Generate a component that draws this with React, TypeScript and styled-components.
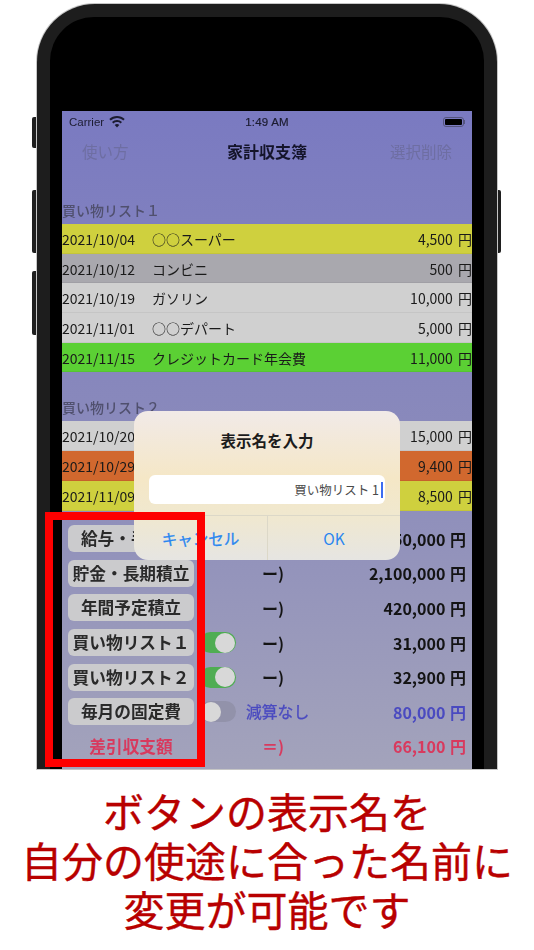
import React from 'react';
import styled, { createGlobalStyle } from 'styled-components';

const JP = `"Noto Sans CJK JP", "Noto Sans", sans-serif`;

const Global = createGlobalStyle`
  html, body { margin: 0; padding: 0; background: #fff; }
  body { font-family: ${JP}; }
`;

const Page = styled.div`
  position: relative;
  width: 534px;
  height: 950px;
  overflow: hidden;
  background: #fff;
`;

const Phone = styled.div`
  position: relative;
  box-sizing: border-box;
  margin: 4px 0 0 37px;
  width: 460px;
  height: 765px;
  padding: 13px 13px 0;
  background: #1d1d1d;
  border-radius: 58px 58px 0 0;
  box-shadow: 0 0 0 1px #c6c6c6;
  filter: blur(0.5px);
`;

const Bezel = styled.div`
  box-sizing: border-box;
  height: 100%;
  padding: 94px 12px 0;
  background: #000;
  border-radius: 44px 44px 0 0;
`;

const Screen = styled.div`
  height: 100%;
  overflow: hidden;
  background: linear-gradient(180deg, #7a7ac1 0%, #8a8abb 50%, #a3a3bb 100%);
`;

const SideKey = styled.div<{ $top: number; $h: number; $right?: boolean }>`
  position: absolute;
  top: ${p => p.$top}px;
  height: ${p => p.$h}px;
  width: 5px;
  background: #1f1f1f;
  ${p => (p.$right ? 'left: 496px; border-radius: 0 2px 2px 0;' : 'left: 32px; border-radius: 2px 0 0 2px;')}
`;

const StatusBar = styled.div`
  display: grid;
  grid-template-columns: 1fr auto 1fr;
  align-items: center;
  height: 21px;
  padding: 0 7px;
  font-family: "Liberation Sans", Arial, sans-serif;
  font-size: 11.5px;
  color: #1c1c30;
`;

const Carrier = styled.div`
  display: flex;
  align-items: center;
  gap: 5px;
`;

const Clock = styled.div`
  font-size: 11.5px;
  letter-spacing: 0.2px;
  -webkit-text-stroke: 0.2px #1c1c30;
`;

const Battery = styled.div`
  justify-self: end;
  position: relative;
  box-sizing: border-box;
  width: 21px;
  height: 10px;
  margin-right: 1px;
  border: 1px solid #55557e;
  border-radius: 3px;
  padding: 1px;
  &::before {
    content: '';
    display: block;
    height: 100%;
    background: #000;
    border-radius: 1px;
  }
  &::after {
    content: '';
    position: absolute;
    left: 20px;
    top: 2px;
    width: 1px;
    height: 4px;
    background: #55557e;
  }
`;

const NavBar = styled.div`
  display: grid;
  grid-template-columns: 1fr auto 1fr;
  align-items: center;
  height: 38px;
  padding: 0 20px;
`;

const NavTitle = styled.div`
  font-size: 16px;
  font-weight: 700;
  color: #14142a;
`;

const NavAction = styled.div<{ $end?: boolean }>`
  font-size: 15.5px;
  color: #6e6ea2;
  text-align: ${p => (p.$end ? 'right' : 'left')};
`;

const SectionTitle = styled.div<{ $top: number }>`
  margin-top: ${p => p.$top}px;
  height: 26px;
  line-height: 24px;
  font-size: 14px;
  font-weight: 500;
  color: #50506e;
`;

const Row = styled.div<{ $bg: string }>`
  display: grid;
  grid-template-columns: 90px 1fr auto;
  align-items: center;
  height: 29.7px;
  background: ${p => p.$bg};
  font-size: 14px;
  word-spacing: 2px;
  color: #1a1a1a;
  box-shadow: inset 0 -1px 0 rgba(0, 0, 0, 0.05);
`;

const Summary = styled.div`
  margin-top: 11px;
  display: flex;
  flex-direction: column;
`;

const SumRow = styled.div`
  display: grid;
  grid-template-columns: 132px 36px 20px 66px 1fr;
  align-items: center;
  height: 34.6px;
  padding: 0 6px;
  color: #141414;
`;

const KeyButton = styled.div`
  height: 27px;
  line-height: 27px;
  border-radius: 6px;
  background: #cbcbcd;
  margin-right: 6px;
  text-align: center;
  font-size: 16.7px;
  font-weight: 700;
  white-space: nowrap;
  overflow: hidden;
  color: #2a2a2a;
`;

const Plain = styled.div`
  margin-right: 6px;
  text-align: center;
  font-size: 16.7px;
  font-weight: 700;
  color: #d83a5e;
`;

const Toggle = styled.div<{ $on?: boolean }>`
  position: relative;
  width: 36px;
  height: 21px;
  border-radius: 11px;
  background: ${p => (p.$on ? '#4fad53' : '#9292aa')};
  &::after {
    content: '';
    position: absolute;
    top: 0.5px;
    ${p => (p.$on ? 'right: 1px;' : 'left: 1px;')}
    width: 20px;
    height: 20px;
    border-radius: 50%;
    background: #d8d8d8;
  }
`;

const Op = styled.div<{ $c?: string }>`
  grid-column: 4;
  font-size: 16px;
  font-weight: 700;
  margin-left: 6px;
  color: ${p => p.$c || '#141414'};
`;

const NoSub = styled.div`
  grid-column: 3 / 5;
  margin-left: 10px;
  font-size: 15.8px;
  -webkit-text-stroke: 0.3px #4a4ac0;
  color: #4a4ac0;
`;

const Amount = styled.div<{ $c?: string }>`
  grid-column: 5;
  text-align: right;
  font-size: 16px;
  font-weight: 700;
  word-spacing: 1px;
  white-space: nowrap;
  color: ${p => p.$c || '#141414'};
`;

const Alert = styled.div`
  position: absolute;
  left: 97px;
  top: 407px;
  width: 266px;
  height: 149px;
  border-radius: 14px;
  background: linear-gradient(180deg, #f1eae8 0%, #f5e7c6 45%, #f0e8cf 70%, #e6e5e2 100%);
  display: flex;
  flex-direction: column;
`;

const AlertTitle = styled.div`
  margin-top: 17px;
  height: 24px;
  line-height: 24px;
  text-align: center;
  font-size: 15.5px;
  font-weight: 700;
  color: #1c1c1c;
`;

const AlertInput = styled.div`
  margin: 23px 15px 0;
  height: 29px;
  border-radius: 6px;
  background: #fff;
  display: flex;
  align-items: center;
  justify-content: flex-end;
  padding-right: 2px;
  font-size: 12.5px;
  color: #4a4a4a;
`;

const Caret = styled.span`
  display: inline-block;
  width: 2px;
  height: 16px;
  margin-left: 2px;
  background: #3c6cf0;
`;

const AlertActions = styled.div`
  margin-top: 11px;
  flex: 1;
  display: grid;
  grid-template-columns: 1fr 1fr;
  border-top: 1px solid #dcd8c8;
`;

const AlertAction = styled.div<{ $strong?: boolean }>`
  display: flex;
  align-items: center;
  justify-content: center;
  font-size: 15.5px;
  -webkit-text-stroke: ${p => (p.$strong ? '0.3px #2a86f0' : '0')};
  color: #2a86f0;
  & + & { border-left: 1px solid #dcd8c8; }
`;

const Highlight = styled.div`
  position: absolute;
  left: 45px;
  top: 512px;
  width: 160px;
  height: 255px;
  box-sizing: border-box;
  border: 8.5px solid #fe0000;
`;

const Caption = styled.div`
  margin-top: 17px;
  text-align: center;
  font-size: 41px;
  line-height: 49px;
  -webkit-text-stroke: 0.4px #b80000;
  color: #b80000;
  white-space: nowrap;
`;

const list1 = [
  ['2021/10/04', '○○スーパー', '4,500 円', '#cfd03e'],
  ['2021/10/12', 'コンビニ', '500 円', '#a9a8ae'],
  ['2021/10/19', 'ガソリン', '10,000 円', '#d0d0d0'],
  ['2021/11/01', '○○デパート', '5,000 円', '#d0d0d0'],
  ['2021/11/15', 'クレジットカード年会費', '11,000 円', '#5bd034'],
];

const list2 = [
  ['2021/10/20', '', '15,000 円', '#d0d0d0'],
  ['2021/10/29', '', '9,400 円', '#d1682e'],
  ['2021/11/09', '', '8,500 円', '#cfd03e'],
];

const summary = [
  { label: '給与・手当等', amount: '2,650,000 円' },
  { label: '貯金・長期積立', amount: '2,100,000 円' },
  { label: '年間予定積立', amount: '420,000 円' },
  { label: '買い物リスト１', amount: '31,000 円', toggle: true },
  { label: '買い物リスト２', amount: '32,900 円', toggle: true },
];

const Wifi = () => (
  <svg width="16" height="12" viewBox="0 0 16 12" fill="#1c1c30">
    <path d="M8 0C5 0 2.3 1.2.3 3.1l1.4 1.5A9.1 9.1 0 0 1 8 2.1c2.4 0 4.7 1 6.3 2.5l1.4-1.5C13.7 1.2 11 0 8 0z" />
    <path d="M8 4C6.1 4 4.3 4.7 3 6l1.4 1.5A5.2 5.2 0 0 1 8 6.1c1.4 0 2.7.5 3.6 1.4L13 6a7.2 7.2 0 0 0-5-2z" />
    <path d="M8 8c-.9 0-1.7.4-2.3 1L8 11.6 10.3 9C9.7 8.4 8.9 8 8 8z" />
  </svg>
);

export default function App() {
  return (
    <Page>
      <Global />
      <SideKey $top={117} $h={31} />
      <SideKey $top={190} $h={63} />
      <SideKey $top={271} $h={64} />
      <SideKey $top={190} $h={63} $right />
      <Phone>
        <Bezel>
          <Screen>
            <StatusBar>
              <Carrier>Carrier <Wifi /></Carrier>
              <Clock>1:49 AM</Clock>
              <Battery />
            </StatusBar>
            <NavBar>
              <NavAction>使い方</NavAction>
              <NavTitle>家計収支簿</NavTitle>
              <NavAction $end>選択削除</NavAction>
            </NavBar>
            <SectionTitle $top={28}>買い物リスト１</SectionTitle>
            {list1.map(r => (
              <Row key={r[0]} $bg={r[3]}>
                <span>{r[0]}</span>
                <span>{r[1]}</span>
                <span>{r[2]}</span>
              </Row>
            ))}
            <SectionTitle $top={23}>買い物リスト２</SectionTitle>
            {list2.map(r => (
              <Row key={r[0]} $bg={r[3]}>
                <span>{r[0]}</span>
                <span>{r[1]}</span>
                <span>{r[2]}</span>
              </Row>
            ))}
            <Summary>
              {summary.map(s => (
                <SumRow key={s.label}>
                  <KeyButton>{s.label}</KeyButton>
                  {s.toggle && <Toggle $on />}
                  <Op>ー)</Op>
                  <Amount>{s.amount}</Amount>
                </SumRow>
              ))}
              <SumRow>
                <KeyButton>毎月の固定費</KeyButton>
                <Toggle />
                <NoSub>減算なし</NoSub>
                <Amount $c="#4a4ac0">80,000 円</Amount>
              </SumRow>
              <SumRow>
                <Plain>差引収支額</Plain>
                <Op $c="#d83a5e">＝)</Op>
                <Amount $c="#d83a5e">66,100 円</Amount>
              </SumRow>
            </Summary>
          </Screen>
        </Bezel>
        <Alert>
          <AlertTitle>表示名を入力</AlertTitle>
          <AlertInput>買い物リスト 1<Caret /></AlertInput>
          <AlertActions>
            <AlertAction $strong>キャンセル</AlertAction>
            <AlertAction>OK</AlertAction>
          </AlertActions>
        </Alert>
      </Phone>
      <Highlight />
      <Caption>
        ボタンの表示名を<br />
        自分の使途に合った名前に<br />
        変更が可能です
      </Caption>
    </Page>
  );
}
